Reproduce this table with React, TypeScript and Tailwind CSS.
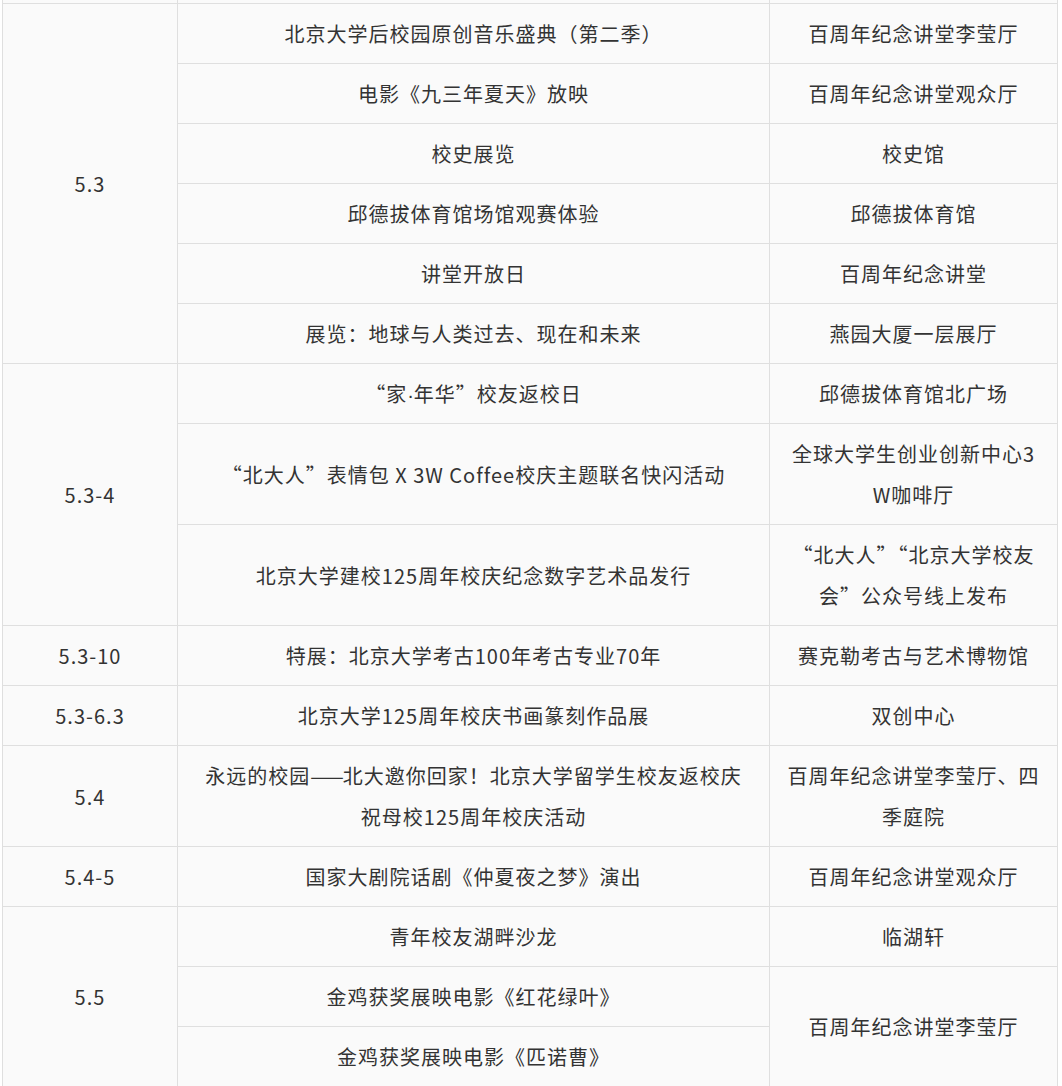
import React from 'react'

type Row = {
  date?: { text: string; span: number }
  event: React.ReactNode
  place?: { text: React.ReactNode; span?: number }
}

const rows: Row[] = [
  { date: { text: '5.3', span: 6 }, event: '北京大学后校园原创音乐盛典（第二季）', place: { text: '百周年纪念讲堂李莹厅' } },
  { event: '电影《九三年夏天》放映', place: { text: '百周年纪念讲堂观众厅' } },
  { event: '校史展览', place: { text: '校史馆' } },
  { event: '邱德拔体育馆场馆观赛体验', place: { text: '邱德拔体育馆' } },
  { event: '讲堂开放日', place: { text: '百周年纪念讲堂' } },
  { event: '展览：地球与人类过去、现在和未来', place: { text: '燕园大厦一层展厅' } },
  {
    date: { text: '5.3-4', span: 3 },
    event: <>“家<span className="font-['Liberation_Sans'] tracking-normal leading-none">·</span>年华”校友返校日</>,
    place: { text: '邱德拔体育馆北广场' },
  },
  {
    event: '“北大人”表情包 X 3W Coffee校庆主题联名快闪活动',
    place: { text: <>全球大学生创业创新中心3<br />W咖啡厅</> },
  },
  {
    event: '北京大学建校125周年校庆纪念数字艺术品发行',
    place: { text: <>“北大人”“北京大学校友<br />会”公众号线上发布</> },
  },
  { date: { text: '5.3-10', span: 1 }, event: '特展：北京大学考古100年考古专业70年', place: { text: '赛克勒考古与艺术博物馆' } },
  { date: { text: '5.3-6.3', span: 1 }, event: '北京大学125周年校庆书画篆刻作品展', place: { text: '双创中心' } },
  {
    date: { text: '5.4', span: 1 },
    event: (
      <>
        永远的校园<span className="tracking-[-1px]">——</span>北大邀你回家！北京大学留学生校友返校庆
        <br />
        祝母校125周年校庆活动
      </>
    ),
    place: { text: <>百周年纪念讲堂李莹厅、四<br />季庭院</> },
  },
  { date: { text: '5.4-5', span: 1 }, event: '国家大剧院话剧《仲夏夜之梦》演出', place: { text: '百周年纪念讲堂观众厅' } },
  { date: { text: '5.5', span: 3 }, event: '青年校友湖畔沙龙', place: { text: '临湖轩' } },
  { event: '金鸡获奖展映电影《红花绿叶》', place: { text: '百周年纪念讲堂李莹厅', span: 2 } },
  { event: '金鸡获奖展映电影《匹诺曹》' },
]

const cell = 'border-r border-b border-[#dfdfdf] px-[17px] py-[9px] text-center align-middle'

export default function App() {
  return (
    <div
      className="w-[1062px] h-[1086px] overflow-hidden bg-white text-[#333333] text-[20px] leading-[41px] tracking-[1px]"
      style={{ fontFamily: '"Noto Sans CJK SC", "Microsoft YaHei", sans-serif' }}
    >
      <table className="ml-[2px] table-fixed border-separate border-spacing-0 bg-[#fafafa]">
        <colgroup>
          <col className="w-[176px]" />
          <col className="w-[592px]" />
          <col className="w-[288px]" />
        </colgroup>
        <tbody>
          {/* partly visible row from above */}
          <tr>
            <td className="h-[4px] p-0 border-l border-r border-b border-[#dfdfdf]" />
            <td className="h-[4px] p-0 border-r border-b border-[#dfdfdf]" />
            <td className="h-[4px] p-0 border-r border-b border-[#dfdfdf]" />
          </tr>
          {rows.map((r, i) => (
            <tr key={i}>
              {r.date && (
                <td rowSpan={r.date.span} className={`${cell} border-l`}>
                  {r.date.text}
                </td>
              )}
              <td className={cell}>{r.event}</td>
              {r.place && (
                <td rowSpan={r.place.span ?? 1} className={cell}>
                  {r.place.text}
                </td>
              )}
            </tr>
          ))}
        </tbody>
      </table>
    </div>
  )
}
